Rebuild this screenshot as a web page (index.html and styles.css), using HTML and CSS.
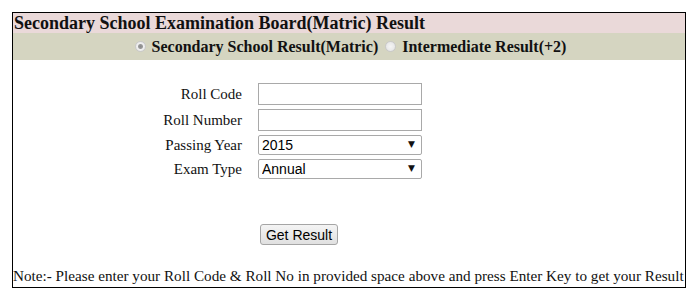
FILE: index.html
```html
<!DOCTYPE html>
<html lang="en">
<head>
    <meta charset="UTF-8">
    <meta name="viewport" content="width=device-width, initial-scale=1.0">
    <title>Matric Result</title>
    <link rel="stylesheet" href="styles.css">
</head>
<body>
    <div class="result-box">
        <div class="title">Secondary School Examination Board(Matric) Result</div>

        <!-- Exam choice -->
        <div class="choice">
            <label><input type="radio" name="exam" checked> Secondary School Result(Matric)</label>
            <label><input type="radio" name="exam"> Intermediate Result(+2)</label>
        </div>

        <form class="result-form" onsubmit="return false;">
            <label for="rollCode">Roll Code</label>
            <input type="text" id="rollCode" class="field">

            <label for="rollNo">Roll Number</label>
            <input type="text" id="rollNo" class="field">

            <label for="year">Passing Year</label>
            <span class="select-wrap">
                <select id="year" class="field pick">
                    <option>2015</option>
                    <option>2014</option>
                    <option>2013</option>
                </select>
                <span class="arrow">&#9660;</span>
            </span>

            <label for="examType">Exam Type</label>
            <span class="select-wrap">
                <select id="examType" class="field pick">
                    <option>Annual</option>
                    <option>Supplementary</option>
                </select>
                <span class="arrow">&#9660;</span>
            </span>

            <span></span>
            <div class="actions"><button type="submit">Get Result</button></div>
        </form>

        <p class="note">Note:- Please enter your Roll Code &amp; Roll No in provided space above and press Enter Key to get your Result</p>
    </div>
</body>
</html>
```

FILE: styles.css
```css
body {
    margin: 0;
    padding: 12px;
    font-family: "Liberation Serif", "Times New Roman", serif;
    color: #111;
    background-color: #fff;
}
.result-box {
    width: 672px;
    border: 1px solid #000;
    overflow: hidden;
}
.title {
    background-color: #ead9d9;
    font-size: 18px;
    font-weight: bold;
    height: 20px;
    line-height: 20px;
    padding-left: 1px;
    white-space: nowrap;
}
.choice {
    background-color: #d5d5c1;
    height: 27px;
    line-height: 27px;
    text-align: center;
    font-size: 16px;
    font-weight: bold;
    white-space: nowrap;
}
.choice label {
    margin-left: 3px;
}
.choice input {
    -webkit-appearance: none;
    appearance: none;
    box-sizing: border-box;
    margin: 0 2px 0 0;
    width: 11px;
    height: 11px;
    vertical-align: 0;
    border: 1px solid #c9c9c9;
    border-radius: 50%;
    background: radial-gradient(circle, #f4f4f4 0, #e2e2e2 100%);
}
.choice input:checked {
    background: radial-gradient(circle, #8a8a8a 0, #9a9a9a 2px, #f0f0f0 3px, #e2e2e2 100%);
}
.result-form {
    display: grid;
    grid-template-columns: 229px 164px;
    column-gap: 16px;
    row-gap: 4px;
    align-items: center;
    padding-top: 23px;
    font-size: 15px;
}
.result-form label {
    text-align: right;
}
.field {
    box-sizing: border-box;
    width: 164px;
    height: 22px;
    border: 1px solid #a9a9a9;
    margin: 0;
    padding: 0 4px;
    font-family: "Liberation Sans", Arial, sans-serif;
    font-size: 14px;
    background-color: #fff;
    color: #000;
}
.select-wrap {
    position: relative;
    display: block;
    height: 20px;
}
.pick {
    -webkit-appearance: none;
    appearance: none;
    height: 20px;
    border-radius: 2px;
    padding-left: 3px;
}
.arrow {
    position: absolute;
    right: 7px;
    top: 4px;
    font-size: 9px;
    font-family: "DejaVu Sans", sans-serif;
    pointer-events: none;
}
.actions {
    padding-top: 41px;
}
.actions button {
    width: 78px;
    height: 21px;
    margin-left: 2px;
    padding: 0;
    font-family: "Liberation Sans", Arial, sans-serif;
    font-size: 14px;
    color: #000;
    border: 1px solid #a5a5a5;
    border-radius: 3px;
    background: linear-gradient(#f4f4f4, #e0e0e0);
}
.note {
    margin: 22px 0 2px 0;
    font-size: 15.2px;
    line-height: 18px;
    white-space: nowrap;
}
```
